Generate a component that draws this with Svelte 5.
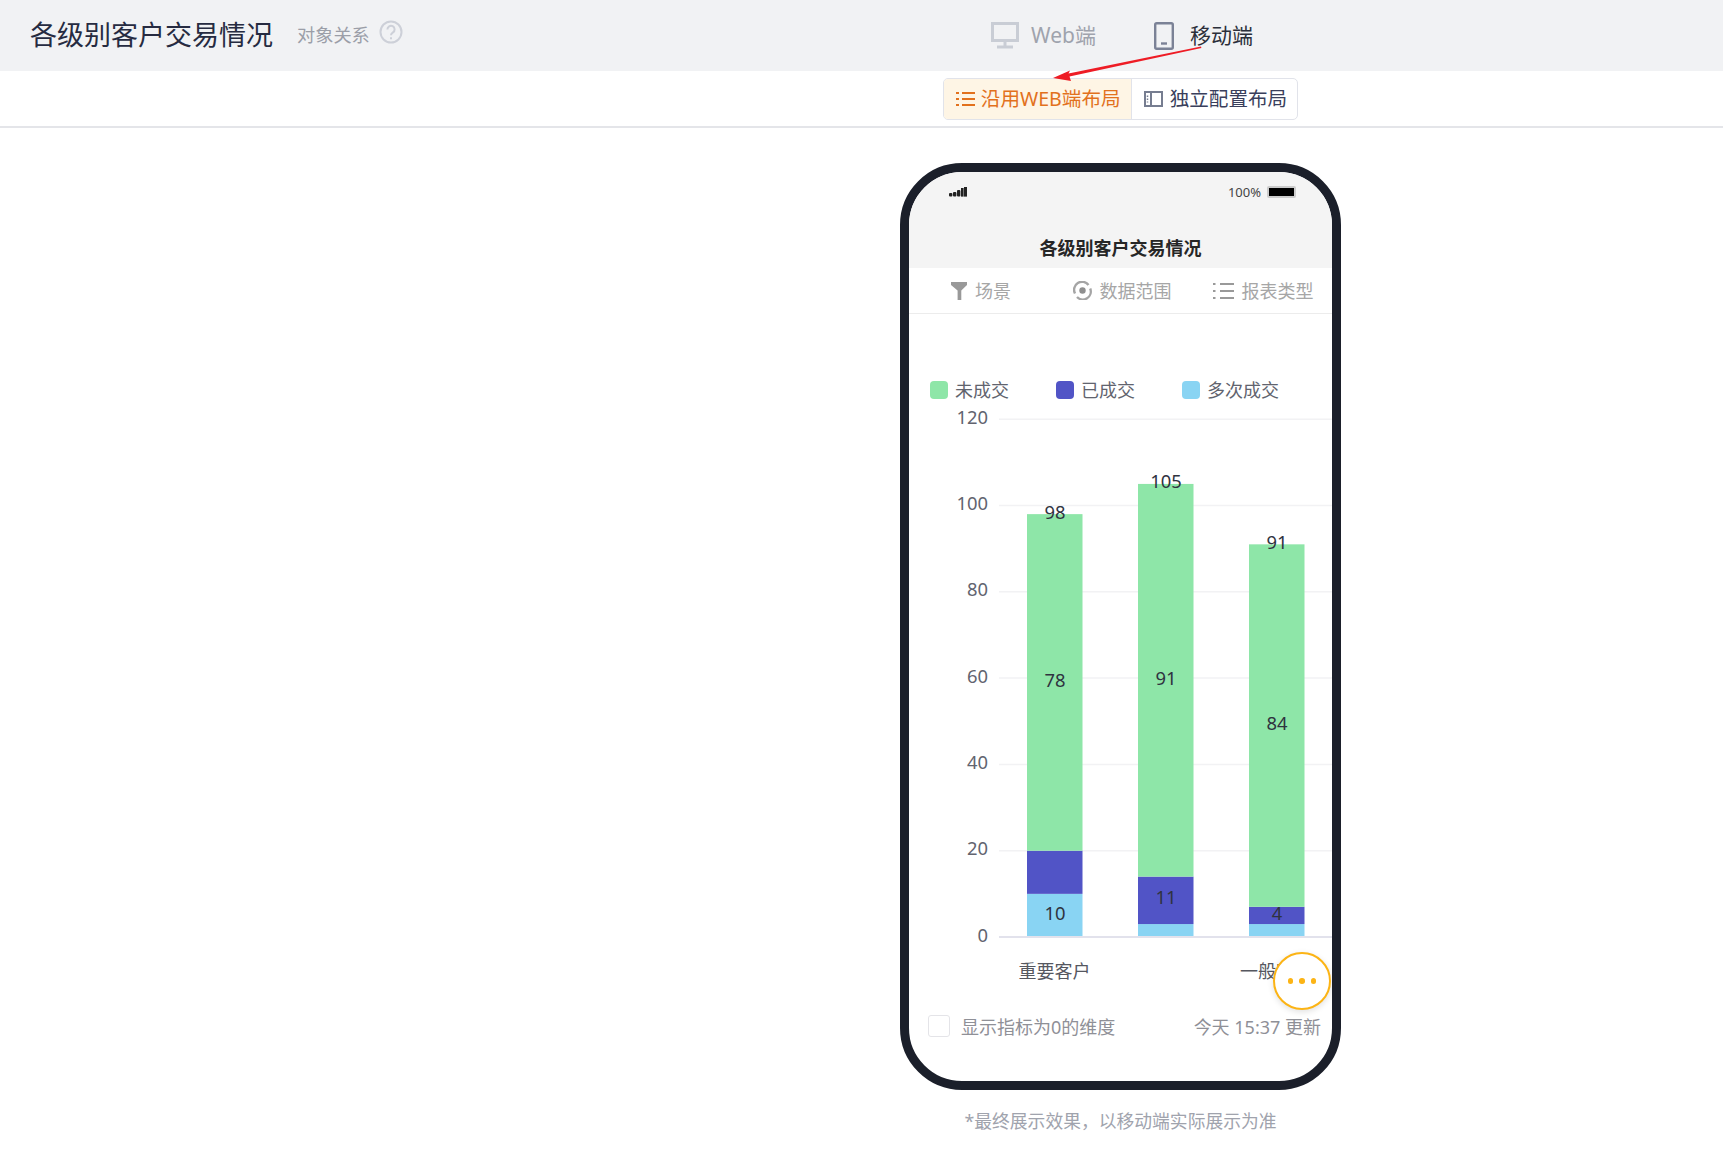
<script>
  const zero = 533;
  const unit = 4.315;
  const ticks = [120, 100, 80, 60, 40, 20];
  const colors = { green: "#8ee6a8", purple: "#5154c6", blue: "#89d4f3" };

  // from/to in chart units, x in svg coordinates
  const bars = [
    {
      x: 118,
      parts: [
        { from: 0, to: 10, color: colors.blue },
        { from: 10, to: 20, color: colors.purple },
        { from: 20, to: 98, color: colors.green }
      ]
    },
    {
      x: 229,
      parts: [
        { from: 0, to: 3, color: colors.blue },
        { from: 3, to: 14, color: colors.purple },
        { from: 14, to: 105, color: colors.green }
      ]
    },
    {
      x: 340,
      parts: [
        { from: 0, to: 3, color: colors.blue },
        { from: 3, to: 7, color: colors.purple },
        { from: 7, to: 91, color: colors.green }
      ]
    }
  ];

  const labels = [
    { x: 146, y: 115, text: "98" },
    { x: 146, y: 283, text: "78" },
    { x: 146, y: 516, text: "10" },
    { x: 257, y: 84, text: "105" },
    { x: 257, y: 281, text: "91" },
    { x: 257, y: 500, text: "11" },
    { x: 368, y: 145, text: "91" },
    { x: 368, y: 326, text: "84" },
    { x: 368, y: 516, text: "4" }
  ];

  const legend = [
    { name: "未成交", color: colors.green },
    { name: "已成交", color: colors.purple },
    { name: "多次成交", color: colors.blue }
  ];

  const y = (v) => zero - v * unit;
</script>

<div class="page">
  <header class="topbar">
    <div class="heading">
      <h1>各级别客户交易情况</h1>
      <span class="relation">对象关系</span>
      <svg class="help" width="24" height="24" viewBox="0 0 24 24" fill="none" stroke="#cdd0d8" stroke-width="2">
        <circle cx="12" cy="12" r="10.5" />
        <path d="M8.4 9.4a3.6 3.6 0 1 1 5.6 3c-1.3.9-2 1.4-2 2.8" />
        <path d="M12 17.2v2" />
      </svg>
    </div>
    <div class="devices">
      <div class="device off">
        <svg width="28" height="27" viewBox="0 0 28 27" fill="none" stroke="#c9cdd5" stroke-width="3">
          <rect x="1.5" y="1.5" width="25" height="17" />
          <path d="M14 19v5M6 25h16" />
        </svg>
        <span>Web端</span>
      </div>
      <div class="device">
        <svg width="20" height="28" viewBox="0 0 20 28" fill="none" stroke="#7b8296" stroke-width="2.4">
          <rect x="1.2" y="1.2" width="17.6" height="25.6" rx="1.5" />
          <path d="M7 21.5h6" />
        </svg>
        <span>移动端</span>
      </div>
    </div>
  </header>

  <div class="modebar">
    <div class="segments">
      <div class="seg active">
        <svg width="19" height="16" viewBox="0 0 19 16" fill="none" stroke="#e2711d" stroke-width="2">
          <path d="M0 2h3M6 2h13M0 8h3M6 8h13M0 14h3M6 14h13" />
        </svg>
        <span>沿用WEB端布局</span>
      </div>
      <div class="seg">
        <svg width="19" height="16" viewBox="0 0 19 16" fill="none" stroke="#767d90" stroke-width="2">
          <rect x="1" y="1" width="17" height="14" />
          <path d="M7 1v14" />
          <path d="M3.5 4.5v7" stroke-width="1.5" stroke-dasharray="1.5 1.5" />
        </svg>
        <span>独立配置布局</span>
      </div>
    </div>
  </div>

  <svg class="annotation" width="160" height="40" viewBox="0 0 160 40">
    <path d="M4 33 21 25.5 19.5 28.5 152 1.5 152.4 3 20.5 31.5 22 36Z" fill="#ee1c25" />
  </svg>

  <main class="preview">
    <div class="phone">
      <div class="screen">
        <div class="appbar">
          <div class="status">
            <svg width="18" height="10" viewBox="0 0 18 10" fill="#222">
              <rect x="0" y="6" width="3.4" height="3.6" rx="1" />
              <rect x="4" y="5" width="3.4" height="4.6" rx="1" />
              <rect x="8" y="3" width="3.4" height="6.6" rx="1" />
              <rect x="12" y="1" width="2.6" height="8.6" />
              <rect x="15" y="0" width="3" height="9.6" />
            </svg>
            <div class="battery">
              <span>100%</span>
              <i class="cell"></i>
            </div>
          </div>
          <div class="apptitle">各级别客户交易情况</div>
        </div>

        <div class="toolbar">
          <div class="tool">
            <svg width="16" height="18" viewBox="0 0 16 18" fill="#999">
              <path d="M0 0h16v3l-5.7 5.6V18H6.6V8.6L0 3z" />
            </svg>
            <span>场景</span>
          </div>
          <div class="tool">
            <svg width="19" height="19" viewBox="0 0 19 19" fill="none" stroke="#a5a5a5" stroke-width="2.4">
              <path d="M2 12.5A8 8 0 0 1 15.5 4" />
              <path d="M17.2 7.5A8 8 0 0 1 4 16" />
              <circle cx="9.5" cy="9.5" r="3.2" fill="#8f8f8f" stroke="none" />
            </svg>
            <span>数据范围</span>
          </div>
          <div class="tool">
            <svg width="21" height="18" viewBox="0 0 21 18" fill="none" stroke="#999" stroke-width="2">
              <path d="M0 2h2.5M7 2h14M0 9h2.5M7 9h14M0 16h2.5M7 16h14" />
            </svg>
            <span>报表类型</span>
          </div>
        </div>

        <div class="legend">
          {#each legend as item}
            <div class="legend-item">
              <i class="swatch" style="background: {item.color}"></i>
              <span>{item.name}</span>
            </div>
          {/each}
        </div>

        <svg class="chart" width="423" height="596" viewBox="0 0 423 596">
          {#each ticks as t}
            <line x1="90" x2="423" y1={y(t)} y2={y(t)} stroke="#f2f2f4" stroke-width="1.5" />
          {/each}
          {#each [...ticks, 0] as t}
            <text class="tick" x="79" y={y(t) + 4.5}>{t}</text>
          {/each}

          {#each bars as bar}
            {#each bar.parts as part}
              <rect x={bar.x} y={y(part.to)} width="55.5" height={(part.to - part.from) * unit} fill={part.color} />
            {/each}
          {/each}
          <line x1="90" x2="423" y1={zero} y2={zero} stroke="#e2e2ec" stroke-width="2" />

          {#each labels as l}
            <text class="value" x={l.x} y={l.y}>{l.text}</text>
          {/each}

          <text class="cat" x="145.5" y="574">重要客户</text>
          <text class="cat" x="367" y="574">一般客户</text>
        </svg>

        <div class="foot">
          <label class="check">
            <i class="box"></i>
            <span>显示指标为0的维度</span>
          </label>
          <span>今天 15:37 更新</span>
        </div>

        <button class="fab" aria-label="更多"><i></i><i></i><i></i></button>
      </div>
    </div>
    <p class="note">*最终展示效果，以移动端实际展示为准</p>
  </main>
</div>

<style>
  :global(body) {
    margin: 0;
    background: #fff;
  }

  .page {
    position: relative;
    min-height: 1167px;
    font-family: "Noto Sans", "Noto Sans CJK SC", sans-serif;
    color: #2b2f45;
  }

  .topbar {
    display: grid;
    grid-template-columns: 518px 1fr;
    align-items: center;
    height: 71px;
    background: #f1f2f4;
  }

  .heading {
    display: flex;
    align-items: center;
    padding-left: 30px;
  }

  h1 {
    margin: 0 24px 2px 0;
    font-size: 27px;
    font-weight: 400;
    line-height: 1;
    color: #262b41;
  }

  .relation {
    padding-bottom: 3px;
    font-size: 18.2px;
    color: #9b9ea8;
  }

  .help {
    margin: -7px 0 0 9px;
  }

  .devices {
    display: flex;
    justify-content: center;
    gap: 58px;
    padding-left: 3px;
    font-size: 21px;
  }

  .device {
    display: flex;
    align-items: center;
    gap: 16px;
    color: #2b2f3a;
  }

  .device span {
    padding-bottom: 4px;
  }

  .device.off {
    gap: 12px;
    color: #9fa3ad;
  }

  .modebar {
    display: grid;
    grid-template-columns: 518px 1fr;
    height: 57px;
    box-sizing: border-box;
    border-bottom: 2px solid #e4e5e9;
  }

  .segments {
    grid-column: 2;
    justify-self: center;
    display: flex;
    height: 42px;
    box-sizing: border-box;
    margin-top: 7px;
    border: 1px solid #e1e3ea;
    border-radius: 5px;
    overflow: hidden;
    font-size: 19.6px;
    color: #3a3f5c;
  }

  .seg {
    display: flex;
    align-items: center;
    gap: 7px;
    padding: 0 10px 0 12px;
    white-space: nowrap;
  }

  .seg span {
    padding-bottom: 3px;
  }

  .seg.active {
    gap: 6px;
    background: #fef5e5;
    color: #e2711d;
    border-right: 1px solid #e1e3ea;
  }

  .annotation {
    position: absolute;
    left: 1049px;
    top: 45px;
  }

  .preview {
    display: flex;
    flex-direction: column;
    align-items: center;
    margin-left: 518px;
    padding-top: 35px;
  }

  .phone {
    width: 441px;
    height: 927px;
    box-sizing: border-box;
    border: 9px solid #1b1f2a;
    border-radius: 62px;
    background: #fff;
    overflow: hidden;
  }

  .screen {
    position: relative;
    display: flex;
    flex-direction: column;
    height: 100%;
  }

  .appbar {
    height: 96px;
    background: #f4f4f4;
  }

  .status {
    display: flex;
    justify-content: space-between;
    align-items: center;
    padding: 13px 36px 0 40px;
    height: 14px;
  }

  .battery {
    display: flex;
    align-items: center;
    gap: 6px;
    font-size: 13px;
    color: #444;
  }

  .cell {
    display: block;
    width: 25px;
    height: 8px;
    background: #000;
    border: 2px solid #ccc;
    border-radius: 2px;
  }

  .apptitle {
    margin-top: 36px;
    text-align: center;
    font-size: 18px;
    font-weight: 700;
    line-height: 26px;
    color: #262626;
  }

  .toolbar {
    display: grid;
    grid-template-columns: repeat(3, 1fr);
    height: 46px;
    box-sizing: border-box;
    border-bottom: 1px solid #ececec;
    font-size: 18px;
    color: #a6a6a6;
  }

  .tool {
    display: flex;
    align-items: center;
    justify-content: center;
    gap: 8px;
    padding-left: 3px;
    white-space: nowrap;
  }

  .tool span {
    padding-bottom: 1px;
  }

  .legend {
    display: flex;
    align-items: center;
    height: 28px;
    margin-top: 62px;
    padding-left: 21px;
    font-size: 18px;
    color: #61636e;
  }

  .legend-item {
    display: flex;
    align-items: center;
    gap: 7px;
    width: 126px;
    white-space: nowrap;
  }

  .legend-item span {
    padding-bottom: 3px;
  }

  .swatch {
    display: block;
    width: 18px;
    height: 18px;
    border-radius: 4px;
  }

  .chart {
    display: block;
    flex: none;
    overflow: hidden;
  }

  .tick {
    font-size: 18.4px;
    fill: #62646f;
    text-anchor: end;
  }

  .value {
    font-size: 18.4px;
    fill: #2f3340;
    text-anchor: middle;
  }

  .cat {
    font-size: 18px;
    fill: #55575f;
    text-anchor: middle;
  }

  .foot {
    display: flex;
    align-items: center;
    justify-content: space-between;
    height: 52px;
    padding: 0 11px 0 19px;
    font-size: 18px;
    color: #8f9097;
  }

  .check {
    display: flex;
    align-items: center;
    gap: 11px;
  }

  .box {
    display: block;
    width: 22px;
    height: 22px;
    box-sizing: border-box;
    border: 1px solid #e4e4e8;
    border-radius: 3px;
  }

  .fab {
    position: absolute;
    right: 1px;
    top: 780px;
    display: flex;
    align-items: center;
    justify-content: center;
    gap: 6px;
    width: 58px;
    height: 58px;
    padding: 0;
    background: #fff;
    border: 2px solid #fcb415;
    border-radius: 50%;
    box-shadow: 0 2px 6px rgba(0, 0, 0, 0.12);
  }

  .fab i {
    display: block;
    width: 5.5px;
    height: 5.5px;
    border-radius: 50%;
    background: #fcb415;
  }

  .note {
    margin: 17px 0 0;
    font-size: 17.8px;
    line-height: 28px;
    color: #a0a3ad;
  }
</style>
